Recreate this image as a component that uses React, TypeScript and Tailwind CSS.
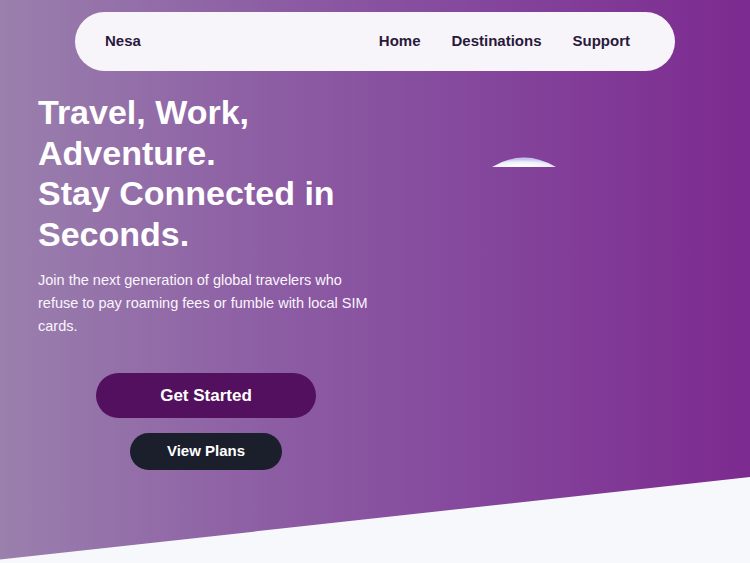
import React from "react";

export default function App() {
  return (
    <div
      className="relative w-full h-[563px] overflow-hidden bg-[linear-gradient(90deg,#9a80ad_0%,#8d5ea4_35%,#84469c_65%,#7c2a8f_100%)]"
      style={{ fontFamily: '"Liberation Sans", Arial, sans-serif' }}
    >
      {/* left dithered strip */}
      <div className="absolute left-0 top-[72px] w-[30px] h-[500px] rounded-tr-[40px] opacity-60 [background-image:radial-gradient(#a584b8_0.6px,transparent_0.7px)] [background-size:2px_2px]" />

      {/* nav */}
      <nav className="relative mx-[75px] mt-[12px] h-[59px] rounded-full bg-[#f8f5fa] flex items-center justify-between pl-[30px] pr-[45px] text-[#2a1a3a]">
        <span className="text-[15px] font-bold -mt-px">Nesa</span>
        <div className="flex items-center gap-[31px] text-[15px] font-bold -mt-px">
          <span>Home</span>
          <span>Destinations</span>
          <span>Support</span>
        </div>
      </nav>

      {/* hero */}
      <div className="relative pl-[38px] mt-[21px] w-[374px] text-white">
        <h1 className="text-[34px] leading-[40.5px] font-bold">
          Travel, Work, Adventure.
          <br />
          Stay Connected in Seconds.
        </h1>
        <p className="mt-[15px] text-[14.5px] leading-[23px] text-[#faf5fc] w-[340px]">
          Join the next generation of global travelers who refuse to pay roaming fees or fumble with local SIM cards.
        </p>
        <div className="mt-[35px] flex flex-col items-center gap-[15px]">
          <button className="w-[220px] h-[45px] rounded-full bg-[#52105e] text-white text-[17px] font-bold">
            Get Started
          </button>
          <button className="w-[152px] h-[37px] rounded-full bg-[#1b1e2b] text-white text-[15px] font-bold">
            View Plans
          </button>
        </div>
      </div>

      {/* globe dome */}
      <svg className="absolute left-[492px] top-[157px]" width="64" height="10" viewBox="0 0 64 10">
        <defs>
          <radialGradient id="g" cx="0.45" cy="0.9" r="0.7">
            <stop offset="0" stopColor="#ffffff" />
            <stop offset="0.6" stopColor="#eef0fb" />
            <stop offset="1" stopColor="#c9c4ec" />
          </radialGradient>
        </defs>
        <path d="M0 10 Q32 -9 64 10 Z" fill="url(#g)" />
      </svg>

      {/* bottom slanted white */}
      <div className="absolute left-0 bottom-0 w-full h-[86px] bg-[#f7f8fc] [clip-path:polygon(0_96%,100%_0,100%_100%,0_100%)]" />
    </div>
  );
}
